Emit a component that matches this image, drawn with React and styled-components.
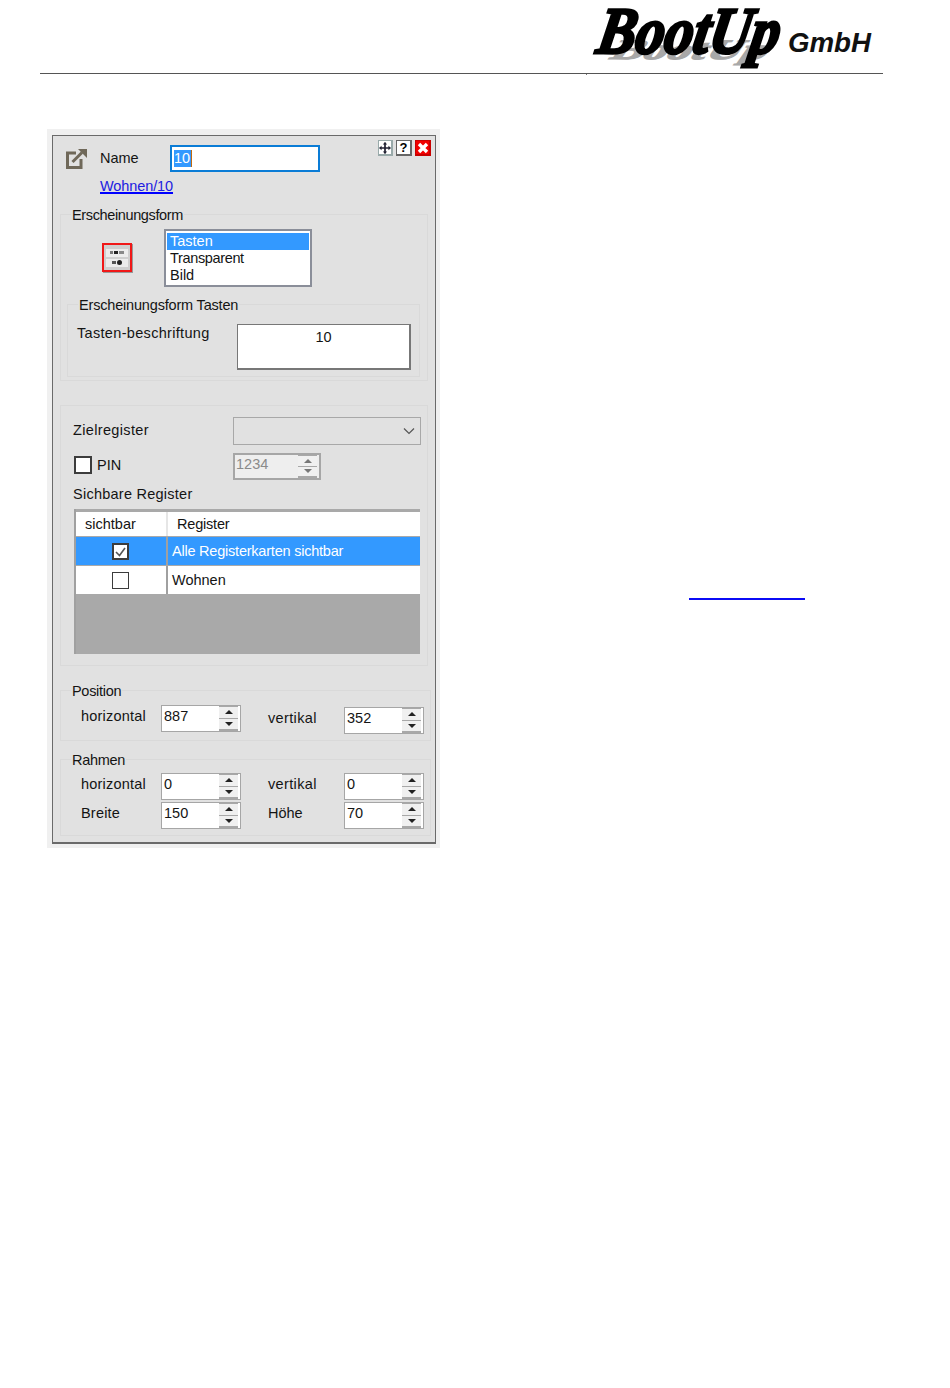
import React from 'react'
import styled, { createGlobalStyle } from 'styled-components'

const Global = createGlobalStyle`
  html, body {
    margin: 0;
    padding: 0;
    background: #fff;
  }
  body {
    font-family: "Liberation Sans", Arial, sans-serif;
    font-size: 14.5px;
    color: #141414;
  }
`

const Page = styled.div`
  width: 950px;
  height: 1388px;
  overflow: hidden;
`

const Header = styled.header`
  position: relative;
  box-sizing: border-box;
  margin-left: 40px;
  width: 843px;
  height: 74px;
  border-bottom: 1px solid #555;
  display: flex;
  justify-content: flex-end;
  align-items: flex-end;
  &::after {
    content: '';
    position: absolute;
    left: 546px;
    top: 74px;
    width: 1px;
    height: 1px;
    background: #777;
  }
`

const Logo = styled.svg`
  display: block;
  width: 293px;
  height: 70px;
  margin-right: 8px;
  overflow: visible;
`

const Main = styled.main`
  display: flex;
  align-items: flex-start;
  margin-top: 55px;
`

const Frame = styled.div`
  box-sizing: border-box;
  margin-left: 47px;
  width: 393px;
  height: 719px;
  padding: 6px 4px 4px 5px;
  background: #f0f0f0;
`

const Dialog = styled.div`
  box-sizing: border-box;
  width: 384px;
  height: 709px;
  padding: 1px 1px 0;
  border: 1px solid #6a6a6a;
  border-bottom-width: 2px;
  background: #e1e1e1;
`

const TopRow = styled.div`
  display: flex;
  align-items: flex-start;
  height: 35px;
`

const OpenIcon = styled.svg`
  width: 21px;
  height: 21px;
  margin: 11px 0 0 12px;
  flex: none;
`

const NameLabel = styled.span`
  width: 70px;
  margin: 13px 0 0 13px;
  line-height: 17px;
  flex: none;
`

const NameInput = styled.div`
  box-sizing: border-box;
  width: 150px;
  height: 27px;
  margin-top: 8px;
  padding: 3px 2px;
  border: 2px solid #0a7cd6;
  background: #fff;
  line-height: 17px;
  flex: none;
`

const Selected = styled.span`
  display: inline-block;
  padding: 0 1px 0 0;
  background: #3399ff;
  color: #fff;
  border-right: 1px solid #c06a10;
`

const WindowButtons = styled.div`
  display: flex;
  gap: 3px;
  margin: 3px 0 0 58px;
`

const WindowButton = styled.span`
  box-sizing: border-box;
  display: flex;
  align-items: center;
  justify-content: center;
  width: ${p => p.$w || 16}px;
  height: 16px;
  background: ${p => p.$bg || '#fff'};
  border: 1px solid ${p => p.$edge || '#444'};
  border-right-width: 2px;
  border-bottom-width: 2px;
  color: #000;
  font-size: 13px;
  font-weight: bold;
  line-height: 12px;
`

const PathLink = styled.a`
  display: block;
  width: max-content;
  margin: 6px 0 0 46px;
  color: #2020e0;
  line-height: 17px;
  letter-spacing: -0.1px;
  text-decoration: underline 1.5px #0000ff;
  text-underline-offset: 1px;
`

const Group = styled.section`
  position: relative;
  box-sizing: border-box;
  margin: ${p => p.$top}px 0 0 ${p => p.$left || 6}px;
  width: ${p => p.$w}px;
  height: ${p => p.$h}px;
  border: 1px solid #d9d9d9;
`

const Legend = styled.span`
  position: absolute;
  left: ${p => p.$x}px;
  top: -8px;
  padding: 0 1px;
  background: #e1e1e1;
  line-height: 17px;
  letter-spacing: ${p => p.$track || 0}px;
  white-space: nowrap;
`

const FormRow = styled.div`
  display: flex;
  align-items: flex-start;
`

const Thumb = styled.div`
  box-sizing: border-box;
  display: flex;
  flex-direction: column;
  justify-content: center;
  gap: 2px;
  width: 30px;
  height: 29px;
  margin: 28px 0 0 41px;
  padding: 2px;
  border: 2px solid #f01818;
  box-shadow: 1px 1px 0 #999;
  background: #cfcfcf;
`

const ThumbBar = styled.span`
  height: 8px;
  background: #ececec;
  display: flex;
  align-items: center;
  justify-content: center;
  gap: 1px;
`

const ThumbMark = styled.i`
  width: ${p => p.$w}px;
  height: ${p => p.$h || 3}px;
  border-radius: ${p => (p.$round ? '50%' : '0')};
  background: ${p => p.$tone || '#222'};
`

const ListBox = styled.ul`
  box-sizing: border-box;
  width: 148px;
  height: 58px;
  margin: 14px 0 0 32px;
  padding: 2px 1px 1px;
  border: 2px solid #8a8e99;
  background: #fff;
  list-style: none;
`

const ListItem = styled.li`
  height: 17px;
  padding-left: 3px;
  line-height: 17px;
  letter-spacing: ${p => p.$track || 0}px;
  background: ${p => (p.$active ? '#3399ff' : 'transparent')};
  color: ${p => (p.$active ? '#fff' : 'inherit')};
`

const CaptionRow = styled.div`
  display: flex;
  padding: 19px 0 0 9px;
`

const CaptionLabel = styled.span`
  width: 160px;
  margin-top: 1px;
  line-height: 17px;
  letter-spacing: 0.32px;
  flex: none;
`

const CaptionBox = styled.div`
  box-sizing: border-box;
  width: 174px;
  height: 46px;
  padding-top: 4px;
  background: #fff;
  border: 1px solid #777;
  border-right-width: 2px;
  border-bottom-width: 2px;
  text-align: center;
  line-height: 17px;
`

const TargetBody = styled.div`
  padding: 11px 0 0 12px;
`

const FieldRow = styled.div`
  display: grid;
  grid-template-columns: 160px auto;
  justify-content: start;
  align-items: center;
  margin-top: ${p => p.$top || 0}px;
`

const FieldLabel = styled.span`
  margin-top: -2px;
  letter-spacing: 0.35px;
`

const Combo = styled.div`
  box-sizing: border-box;
  display: flex;
  align-items: center;
  justify-content: flex-end;
  width: 188px;
  height: 28px;
  padding-right: 5px;
  border: 1px solid #a8a8a8;
  background: #e1e1e1;
`

const PinCell = styled.label`
  display: flex;
  align-items: center;
  align-self: start;
  gap: 5px;
  margin-top: 3px;
  padding-left: 1px;
  line-height: 18px;
`

const PinText = styled.span`
  margin-top: -1px;
`

const Box = styled.span`
  box-sizing: border-box;
  display: flex;
  align-items: center;
  justify-content: center;
  width: ${p => p.$size}px;
  height: ${p => p.$size}px;
  background: #fff;
  border: ${p => p.$edge}px solid #3c3c3c;
`

const SpinBox = styled.div`
  box-sizing: border-box;
  display: flex;
  width: ${p => p.$w}px;
  height: 27px;
  margin-top: ${p => p.$shift || 0}px;
  border: ${p => (p.$off ? 2 : 1)}px solid #a6a6a6;
  background: ${p => (p.$off ? '#eeeeee' : '#fff')};
  color: ${p => (p.$off ? '#8a8a8a' : 'inherit')};
`

const SpinValue = styled.span`
  flex: 1;
  padding: ${p => (p.$off ? 1 : 2)}px 0 0 ${p => (p.$off ? 1 : 2)}px;
  line-height: 17px;
`

const SpinButtons = styled.span`
  display: flex;
  flex-direction: column;
  gap: 1px;
  width: 19px;
  margin-right: 2px;
  padding: 1px 0 2px;
  background: #a8a8a8;
`

const SpinArrow = styled.span`
  flex: 1;
  display: flex;
  align-items: center;
  justify-content: center;
  background: #f0f0f0;
  &::before {
    content: '';
    border-left: 4px solid transparent;
    border-right: 4px solid transparent;
    ${p => (p.$down ? 'border-top: 4px solid' : 'border-bottom: 4px solid')} ${p => (p.$off ? '#777' : '#222')};
  }
`

const SubTitle = styled.div`
  margin: 5px 0 6px;
  height: 18px;
  line-height: 18px;
  letter-spacing: 0.25px;
`

const Table = styled.div`
  box-sizing: border-box;
  width: 346px;
  height: 145px;
  margin-left: 1px;
  padding-top: 3px;
  border-left: 2px solid #a0a0a0;
  background: #a9a9a9;
`

const HeadRow = styled.div`
  display: grid;
  grid-template-columns: 90px 1fr;
  column-gap: 2px;
  height: 24px;
  background: #e6e6e6;
  line-height: 24px;
`

const HeadCell = styled.span`
  background: #fff;
  padding-left: ${p => p.$pad}px;
  letter-spacing: ${p => p.$track || 0}px;
`

const DataRow = styled.div`
  display: grid;
  grid-template-columns: 90px 1fr;
  column-gap: 2px;
  height: 28px;
  margin-top: 1px;
  background: #a0a0a0;
  line-height: 28px;
`

const CheckCell = styled.span`
  display: flex;
  align-items: center;
  justify-content: center;
  padding-right: 2px;
  background: ${p => (p.$active ? '#3399ff' : '#fff')};
`

const TextCell = styled.span`
  padding-left: 4px;
  letter-spacing: ${p => p.$track || 0}px;
  background: ${p => (p.$active ? '#3399ff' : '#fff')};
  color: ${p => (p.$active ? '#fff' : 'inherit')};
`

const Coordinates = styled.div`
  display: grid;
  grid-template-columns: 80px 80px 103px 80px;
  row-gap: 2px;
  padding: ${p => p.$top}px 0 0 20px;
  align-items: start;
`

const CoordLabel = styled.span`
  line-height: 17px;
  margin-top: ${p => p.$shift ?? 3}px;
  margin-left: ${p => p.$gap || 0}px;
  letter-spacing: ${p => p.$track || 0}px;
  white-space: nowrap;
`

const Aside = styled.div`
  margin-left: 249px;
  padding-top: 469px;
`

const BlankLink = styled.a`
  display: block;
  width: 116px;
  height: 2px;
  background: #0b0bf5;
`

const Spin = ({ value, w = 80, shift, off }) => (
  <SpinBox $w={w} $shift={shift} $off={off}>
    <SpinValue $off={off}>{value}</SpinValue>
    <SpinButtons>
      <SpinArrow $off={off} />
      <SpinArrow $down $off={off} />
    </SpinButtons>
  </SpinBox>
)

const App = () => {
  return (
    <Page>
      <Global />
      <Header>
        <Logo viewBox="0 0 293 70">
          <text
            transform="translate(26 56) skewX(-35) scale(1 0.4)"
            fontFamily="Liberation Serif"
            fontWeight="bold"
            fontSize="70"
            textLength="156"
            lengthAdjust="spacingAndGlyphs"
            fill="#a8a8a8"
            stroke="#a8a8a8"
            strokeWidth="3"
          >
            BootUp
          </text>
          <text
            transform="translate(13 50) skewX(-10)"
            fontFamily="Liberation Serif"
            fontStyle="italic"
            fontWeight="bold"
            fontSize="66"
            textLength="182"
            lengthAdjust="spacingAndGlyphs"
            fill="#000"
            stroke="#000"
            strokeWidth="3"
          >
            BootUp
          </text>
          <text
            x="206"
            y="49"
            fontFamily="Liberation Sans"
            fontStyle="italic"
            fontWeight="bold"
            fontSize="27"
            textLength="83"
            lengthAdjust="spacingAndGlyphs"
            fill="#111"
          >
            GmbH
          </text>
        </Logo>
      </Header>
      <Main>
        <Frame>
          <Dialog>
            <TopRow>
              <OpenIcon viewBox="0 0 21 21">
                <path d="M10 5H1.5v14.5H15V11" fill="none" stroke="#6f6859" strokeWidth="3" />
                <path d="M6.5 14L16 4.5" fill="none" stroke="#6f6859" strokeWidth="3" />
                <path d="M12 1h9v9z" fill="#6f6859" />
              </OpenIcon>
              <NameLabel>Name</NameLabel>
              <NameInput>
                <Selected>10</Selected>
              </NameInput>
              <WindowButtons>
                <WindowButton $w={15} $edge="#9aa">
                  <svg width="12" height="12" viewBox="0 0 14 14">
                    <path d="M7 1v12M1 7h12" stroke="#223" strokeWidth="2" />
                    <path d="M7 0l2.5 3h-5zM7 14l2.5-3h-5zM0 7l3-2.5v5zM14 7l-3-2.5v5z" fill="#223" />
                  </svg>
                </WindowButton>
                <WindowButton $edge="#666">?</WindowButton>
                <WindowButton $bg="#f20000" $edge="#c80000">
                  <svg width="12" height="12" viewBox="0 0 12 12">
                    <path d="M2 2l8 8M10 2l-8 8" stroke="#fff" strokeWidth="3.4" />
                  </svg>
                </WindowButton>
              </WindowButtons>
            </TopRow>
            <PathLink>Wohnen/10</PathLink>

            <Group $top={19} $w={368} $h={167}>
              <Legend $x={10} $track={-0.37}>Erscheinungsform</Legend>
              <FormRow>
                <Thumb>
                  <ThumbBar>
                    <ThumbMark $w={3} $tone="#777" />
                    <ThumbMark $w={4} />
                    <ThumbMark $w={5} $tone="#888" />
                  </ThumbBar>
                  <ThumbBar>
                    <ThumbMark $w={4} $tone="#555" />
                    <ThumbMark $w={5} $h={5} $round />
                  </ThumbBar>
                </Thumb>
                <ListBox>
                  <ListItem $active>Tasten</ListItem>
                  <ListItem $track={-0.35}>Transparent</ListItem>
                  <ListItem>Bild</ListItem>
                </ListBox>
              </FormRow>
              <Group $top={17} $w={353} $h={73}>
                <Legend $x={10} $track={-0.18}>Erscheinungsform Tasten</Legend>
                <CaptionRow>
                  <CaptionLabel>Tasten-beschriftung</CaptionLabel>
                  <CaptionBox>10</CaptionBox>
                </CaptionRow>
              </Group>
            </Group>

            <Group $top={24} $w={368} $h={261}>
              <TargetBody>
                <FieldRow>
                  <FieldLabel>Zielregister</FieldLabel>
                  <Combo>
                    <svg width="12" height="8" viewBox="0 0 12 8">
                      <path d="M1 1.5l5 5 5-5" fill="none" stroke="#555" strokeWidth="1.2" />
                    </svg>
                  </Combo>
                </FieldRow>
                <FieldRow $top={8}>
                  <PinCell>
                    <Box $size={18} $edge={2} />
                    <PinText>PIN</PinText>
                  </PinCell>
                  <Spin value="1234" w={88} off />
                </FieldRow>
                <SubTitle>Sichbare Register</SubTitle>
                <Table>
                  <HeadRow>
                    <HeadCell $pad={9}>sichtbar</HeadCell>
                    <HeadCell $pad={9} $track={-0.2}>Register</HeadCell>
                  </HeadRow>
                  <DataRow>
                    <CheckCell $active>
                      <Box $size={17} $edge={2}>
                        <svg width="13" height="13" viewBox="0 0 13 13">
                          <path d="M2 7l3.5 3.5L11 3" fill="none" stroke="#555" strokeWidth="1.6" />
                        </svg>
                      </Box>
                    </CheckCell>
                    <TextCell $active $track={-0.22}>Alle Registerkarten sichtbar</TextCell>
                  </DataRow>
                  <DataRow>
                    <CheckCell>
                      <Box $size={17} $edge={1} />
                    </CheckCell>
                    <TextCell>Wohnen</TextCell>
                  </DataRow>
                </Table>
              </TargetBody>
            </Group>

            <Group $top={24} $w={371} $h={51}>
              <Legend $x={10} $track={-0.3}>Position</Legend>
              <Coordinates $top={14}>
                <CoordLabel $track={0.2}>horizontal</CoordLabel>
                <Spin value="887" />
                <CoordLabel $gap={27} $shift={5} $track={0.35}>vertikal</CoordLabel>
                <Spin value="352" shift={2} />
              </Coordinates>
            </Group>

            <Group $top={18} $w={371} $h={77}>
              <Legend $x={10} $track={-0.3}>Rahmen</Legend>
              <Coordinates $top={13}>
                <CoordLabel $track={0.2}>horizontal</CoordLabel>
                <Spin value="0" />
                <CoordLabel $gap={27} $track={0.35}>vertikal</CoordLabel>
                <Spin value="0" />
                <CoordLabel $track={0.2}>Breite</CoordLabel>
                <Spin value="150" />
                <CoordLabel $gap={27}>Höhe</CoordLabel>
                <Spin value="70" />
              </Coordinates>
            </Group>
          </Dialog>
        </Frame>
        <Aside>
          <BlankLink />
        </Aside>
      </Main>
    </Page>
  )
}

export default App
